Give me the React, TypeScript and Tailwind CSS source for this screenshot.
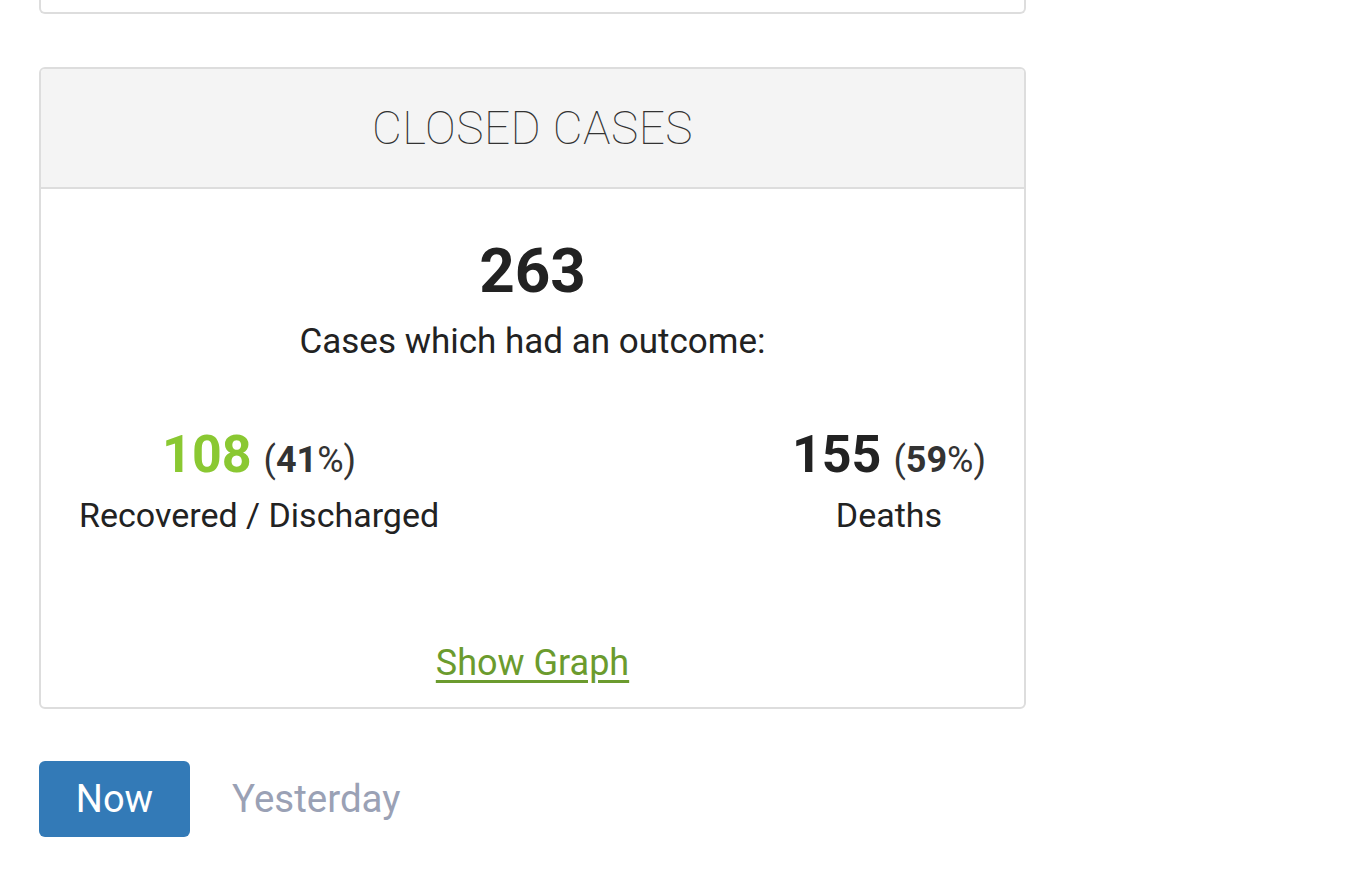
export default function App() {
  return (
    <div className="min-h-screen bg-white font-['Roboto',sans-serif] text-[#222]">
      <div className="w-[987px] ml-[39px]">
        <div className="h-[14px] border-2 border-t-0 border-[#ddd] rounded-b-[6px] bg-white" />

        <div className="mt-[53px] border-2 border-[#ddd] rounded-[6px] overflow-hidden">
          <div className="h-[120px] bg-[#f4f4f4] border-b-2 border-[#ddd] flex items-center justify-center">
            <h2 className="text-[46px] font-thin tracking-[0.5px] text-[#333]">CLOSED CASES</h2>
          </div>

          <div className="pt-[47px] pb-[23px] px-[38px] text-center">
            <div className="text-[62px] leading-[70px] font-bold text-[#222]">263</div>
            <div className="mt-[15px] text-[35px] leading-[42px]">Cases which had an outcome:</div>

            <div className="mt-[64px] flex justify-between">
              <div className="text-center">
                <div className="leading-[56px]">
                  <span className="text-[52px] font-bold text-[#8ac832]">108</span>
                  <span className="ml-[12px] text-[36px] text-[#333]">
                    (<span className="font-bold">41</span>%)
                  </span>
                </div>
                <div className="-mt-[1px] text-[34px] leading-[42px]">Recovered / Discharged</div>
              </div>
              <div className="text-center">
                <div className="leading-[56px]">
                  <span className="text-[52px] font-bold text-[#222]">155</span>
                  <span className="ml-[12px] text-[36px] text-[#333]">
                    (<span className="font-bold">59</span>%)
                  </span>
                </div>
                <div className="-mt-[1px] text-[34px] leading-[42px]">Deaths</div>
              </div>
            </div>

            <div className="mt-[106px]">
              <a href="#" className="text-[36px] leading-[42px] text-[#6b9b2e] underline underline-offset-[5px]">
                Show Graph
              </a>
            </div>
          </div>
        </div>

        <div className="mt-[52px] flex items-center gap-[42px]">
          <button className="w-[151px] h-[76px] rounded-[6px] bg-[#337ab7] text-white text-[38px]">Now</button>
          <span className="text-[38.5px] text-[#9aa1b5]">Yesterday</span>
        </div>
      </div>
    </div>
  )
}
